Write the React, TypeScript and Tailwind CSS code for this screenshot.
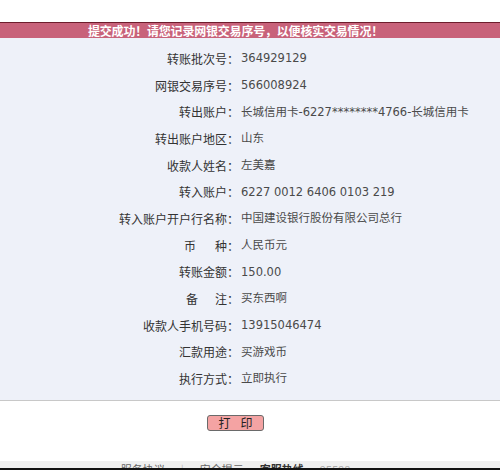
const rows: { label: React.ReactNode; value: string }[] = [
  { label: '转账批次号：', value: '364929129' },
  { label: '网银交易序号：', value: '566008924' },
  { label: '转出账户：', value: '长城信用卡-6227********4766-长城信用卡' },
  { label: '转出账户地区：', value: '山东' },
  { label: '收款人姓名：', value: '左美嘉' },
  { label: '转入账户：', value: '6227 0012 6406 0103 219' },
  { label: '转入账户开户行名称：', value: '中国建设银行股份有限公司总行' },
  {
    label: (
      <>
        <span className="mr-[19px]">币</span>种：
      </>
    ),
    value: '人民币元',
  },
  { label: '转账金额：', value: '150.00' },
  {
    label: (
      <>
        <span className="mr-[17px]">备</span>注：
      </>
    ),
    value: '买东西啊',
  },
  { label: '收款人手机号码：', value: '13915046474' },
  { label: '汇款用途：', value: '买游戏币' },
  { label: '执行方式：', value: '立即执行' },
];

export default function App() {
  return (
    <div className="w-[500px] h-[470px] overflow-hidden bg-white pt-[22px] font-['Noto_Sans_CJK_SC',sans-serif]">
      {/* title band */}
      <div className="h-4 border-t border-[#6e1d2c] bg-[#c8627a] flex items-center">
        <div className="w-[471px] text-center text-[12px] leading-none font-bold text-white tracking-[-0.2px]">
          提交成功！请您记录网银交易序号，以便核实交易情况！
        </div>
      </div>

      {/* detail table */}
      <div className="bg-[#eef1f9] border-b border-[#c8c8c8] pt-[7.7px] pb-[7.3px]">
        {rows.map((r, i) => (
          <div key={i} className="flex items-center h-[26.67px]">
            <div className="w-[239px] text-right text-[12px] text-[#333] whitespace-nowrap">{r.label}</div>
            <div className="pl-[2px] text-[11.5px] text-[#4a4a4a] whitespace-nowrap font-['DejaVu_Sans','Noto_Sans_CJK_SC',sans-serif]">
              {r.value}
            </div>
          </div>
        ))}
      </div>

      {/* actions */}
      <div className="h-[60px] flex justify-center w-[471px] pt-[14px]">
        <button className="h-4 w-[57px] rounded-[3px] border border-[#6a6a6a] bg-[#f4a3a3] text-[12px] leading-none text-[#222] flex items-center justify-center">
          <span className="mr-[10px]">打</span>印
        </button>
      </div>

      {/* cut-off footer */}
      <div className="h-[9px] overflow-hidden bg-[#efefef] border-b-2 border-[#111]">
        <div className="flex justify-center gap-4 pt-[1px] text-[11px] leading-[14px] text-[#666] w-[471px]">
          <span>服务协议</span>
          <span className="text-[#bbb]">|</span>
          <span>安全提示</span>
          <span className="text-[#333] font-bold">客服热线</span>
          <span className="text-[#aaa]">95588</span>
        </div>
      </div>
    </div>
  );
}
